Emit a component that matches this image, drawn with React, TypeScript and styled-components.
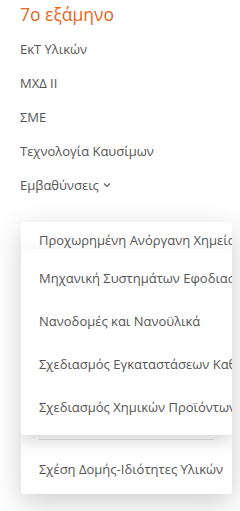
import React from "react";
import styled, { createGlobalStyle } from "styled-components";

const Global = createGlobalStyle`
  html, body { margin: 0; padding: 0; background: #fff; }
  body { font-family: "Open Sans", "Noto Sans", sans-serif; width: 240px; height: 511px; overflow: hidden; }
`;

const Page = styled.div`
  padding: 2px 0 0 20px;
  display: flex;
  flex-direction: column;
`;

const Heading = styled.h2`
  margin: 0;
  font-size: 17.5px;
  font-weight: 400;
  line-height: 24px;
  color: #e4661d;
`;

const NavList = styled.ul`
  list-style: none;
  margin: 14px 0 0;
  padding: 0;
  display: flex;
  flex-direction: column;
  gap: 16px;
`;

const NavItem = styled.li`
  font-size: 13px;
  line-height: 18px;
  color: #555;
  display: flex;
  align-items: center;
  gap: 4px;
`;

const Dropdown = styled.div`
  margin: 28px 0 0 1px;
  width: 211px;
  background: #fff;
  border-radius: 3px;
  box-shadow: 0 8px 28px rgba(0, 0, 0, 0.2);
  padding: 9px 0 0;
  display: flex;
  flex-direction: column;
  overflow: hidden;
`;

const Item = styled.div<{ $h: number }>`
  height: ${(p) => p.$h}px;
  display: flex;
  align-items: center;
  padding-left: 18px;
  white-space: nowrap;
  font-size: 13px;
  color: #555;
`;

const SubCard = styled.div`
  background: #fff;
  border-radius: 3px;
  box-shadow: 0 6px 16px rgba(0, 0, 0, 0.16);
  padding: 7px 0 6px;
  display: flex;
  flex-direction: column;
  position: relative;
`;

const Divider = styled.hr`
  border: 0;
  height: 1px;
  background: #e2e2e2;
  margin: 4px 18px 4px;
`;

const Chevron = () => (
  <svg width="8" height="6" viewBox="0 0 8 6" fill="none">
    <path d="M1 1.5 L4 4.5 L7 1.5" stroke="#555" strokeWidth="1.1" />
  </svg>
);

export default function App() {
  return (
    <>
      <Global />
      <Page>
        <Heading>7ο εξάμηνο</Heading>
        <NavList>
          <NavItem>ΕκΤ Υλικών</NavItem>
          <NavItem>ΜΧΔ ΙΙ</NavItem>
          <NavItem>ΣΜΕ</NavItem>
          <NavItem>Τεχνολογία Καυσίμων</NavItem>
          <NavItem>
            Εμβαθύνσεις <Chevron />
          </NavItem>
        </NavList>
        <Dropdown>
          <Item $h={18}>Προχωρημένη Ανόργανη Χημεία</Item>
          <SubCard>
            <Item $h={43}>Μηχανική Συστημάτων Εφοδιασμού</Item>
            <Item $h={43}>Νανοδομές και Νανοϋλικά</Item>
            <Item $h={43.5}>Σχεδιασμός Εγκαταστάσεων Καθαρισμού</Item>
            <Item $h={43}>Σχεδιασμός Χημικών Προϊόντων</Item>
          </SubCard>
          <Divider />
          <Item $h={50}>Σχέση Δομής-Ιδιότητες Υλικών</Item>
        </Dropdown>
      </Page>
    </>
  );
}
